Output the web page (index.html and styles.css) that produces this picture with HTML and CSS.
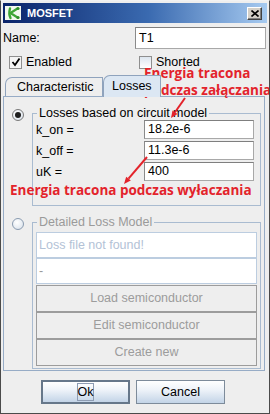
FILE: index.html
```html
<!DOCTYPE html>
<html lang="pl">
<head>
    <meta charset="UTF-8">
    <title>MOSFET</title>
    <link rel="stylesheet" href="styles.css">
</head>
<body>
    <div class="window">
        <div class="titlebar">
            <svg class="app-icon" width="16" height="14" viewBox="0 0 16 14">
                <rect x="0" y="0" width="16" height="14" fill="#f2f8ee"/>
                <path d="M5 2.5 C4 6 4 9 5.5 12" stroke="#3da535" stroke-width="2.4" fill="none" stroke-linecap="round"/>
                <path d="M5.5 7 L12.5 2.5 M5.5 7 L12.5 11.5" stroke="#3da535" stroke-width="2.2" fill="none" stroke-linecap="round"/>
                <circle cx="13" cy="2.5" r="1.6" fill="#2f8f2a"/>
                <circle cx="13" cy="11.5" r="1.6" fill="#2f8f2a"/>
            </svg>
            <span class="title">MOSFET</span>
            <span class="close">
                <svg width="8" height="7" viewBox="0 0 8 7">
                    <path d="M0.5 0.5 L7.5 6.5 M7.5 0.5 L0.5 6.5" stroke="#000" stroke-width="1.6"/>
                </svg>
            </span>
        </div>

        <div class="name-row">
            <span class="label">Name:</span>
            <div class="field name-field">T1</div>
        </div>

        <div class="check-row">
            <div class="check-item">
                <span class="check checked">
                    <svg width="10" height="10" viewBox="0 0 10 10">
                        <path d="M1.5 5 L4 8 L8.5 1.5" stroke="#000" stroke-width="1.8" fill="none"/>
                    </svg>
                </span>
                Enabled
            </div>
            <div class="check-item">
                <span class="check"></span>
                Shorted
            </div>
        </div>

        <div class="tabs">
            <div class="tab tab-char">Characteristic</div>
            <div class="tab tab-losses active">Losses</div>
        </div>

        <div class="panel">
            <div class="option">
                <span class="radio on"></span>
                <fieldset class="group">
                    <legend>Losses based on circuit model</legend>
                    <div class="params">
                        <div class="param"><span>k_on =</span><div class="field">18.2e-6</div></div>
                        <div class="param"><span>k_off =</span><div class="field">11.3e-6</div></div>
                        <div class="param"><span>uK =</span><div class="field">400</div></div>
                    </div>
                </fieldset>
            </div>

            <div class="option">
                <span class="radio"></span>
                <fieldset class="group group-off">
                    <legend>Detailed Loss Model</legend>
                    <div class="file-field hint">Loss file not found!</div>
                    <div class="file-field">-</div>
                    <div class="flat-buttons">
                        <div class="flat-btn">Load semiconductor</div>
                        <div class="flat-btn">Edit semiconductor</div>
                        <div class="flat-btn">Create new</div>
                    </div>
                </fieldset>
            </div>
        </div>

        <div class="footer">
            <button class="btn btn-default"><span class="focus">Ok</span></button>
            <button class="btn">Cancel</button>
        </div>

        <!-- adnotacje na zrzucie -->
        <div class="note note-on">Energia tracona<br>podczas załączania</div>
        <div class="note note-off">Energia tracona podczas wyłaczania</div>
        <svg class="arrows" width="270" height="414" viewBox="0 0 270 414">
            <path d="M184 97 L174 111.3" stroke="#e3232b" stroke-width="2"/>
            <polygon points="170,117 176.5,113 171.5,109.6" fill="#e3232b"/>
            <path d="M146 156 L127.5 177.7" stroke="#e3232b" stroke-width="2"/>
            <polygon points="123,183 129.8,179.6 125.2,175.8" fill="#e3232b"/>
        </svg>
    </div>
</body>
</html>
```

FILE: styles.css
```css
* {
    margin: 0;
    padding: 0;
    box-sizing: border-box;
}

body {
    background: #eeeeee;
    font-family: 'Liberation Sans', Arial, sans-serif;
    font-size: 12.5px;
    color: #000;
}

.window {
    position: relative;
    width: 270px;
    height: 414px;
    padding: 2px;
    background: #eeeeee;
    border: 1px solid #4a4a4a;
    border-top-color: #f2f2f2;
    overflow: hidden;
}

/* Pasek tytułu */
.titlebar {
    height: 20px;
    display: flex;
    align-items: center;
    padding: 0 5px 0 2px;
    background: linear-gradient(to right, #0a246a, #3a6ab0 55%, #a6caf0);
}

.title {
    margin-left: 6px;
    color: #fff;
    font-weight: bold;
    font-size: 11px;
}

.close {
    margin-left: auto;
    width: 15px;
    height: 13px;
    display: flex;
    align-items: center;
    justify-content: center;
    background: #d4d0c8;
    border: 1px solid;
    border-color: #ffffff #404040 #404040 #ffffff;
    box-shadow: inset -1px -1px #808080;
}

/* Nazwa */
.name-row {
    margin-top: 4px;
    height: 22px;
    display: flex;
    align-items: center;
    justify-content: space-between;
    padding-right: 1px;
}

.field {
    background: #fff;
    border: 1px solid #a8a8a8;
    border-top-color: #7f7f7f;
    border-left-color: #8a8a8a;
    padding-left: 3px;
    white-space: nowrap;
}

.name-field {
    width: 131px;
    height: 22px;
    line-height: 20px;
}

/* Checkboxy */
.check-row {
    margin-top: 3px;
    height: 20px;
    display: grid;
    grid-template-columns: 130px auto;
    align-items: center;
    padding-left: 6px;
}

.check-item {
    display: flex;
    align-items: center;
}

.check {
    width: 13px;
    height: 13px;
    margin-right: 4px;
    display: flex;
    align-items: center;
    justify-content: center;
    border: 1px solid #8f8f8f;
    background: linear-gradient(#dde6ef, #ffffff);
}

.check.checked {
    background: #f4f4f4;
}

/* Zakładki */
.tabs {
    margin-top: 3px;
    height: 21px;
    display: flex;
    align-items: flex-end;
    padding-left: 2px;
}

.tab {
    height: 19px;
    line-height: 18px;
    border: 1px solid #8fa3bd;
    border-bottom: none;
    border-top-left-radius: 7px;
    background: #eeeeee;
    white-space: nowrap;
}

.tab-char {
    width: 98px;
    padding-left: 11px;
}

.tab-losses {
    width: 58px;
    padding-left: 8px;
}

.tab.active {
    position: relative;
    z-index: 1;
    height: 22px;
    margin-bottom: -1px;
    line-height: 20px;
    background: #dce7f3;
}

.panel {
    margin-right: 2px;
    border: 1px solid #97acc6;
    padding: 0 0 1px 4px;
    background: #eeeeee;
}

.option {
    margin-top: 9px;
    display: flex;
    align-items: flex-start;
}

.radio {
    flex: none;
    width: 12px;
    height: 12px;
    margin: 3px 8px 0 4px;
    border-radius: 50%;
    border: 1px solid #8a9bb0;
    background: radial-gradient(circle at 40% 35%, #ffffff, #d6dfe9);
    display: flex;
    align-items: center;
    justify-content: center;
}

.radio.on {
    border-color: #7a7a7a;
}

.radio.on::after {
    content: '';
    width: 6px;
    height: 6px;
    border-radius: 50%;
    background: #1e1e1e;
}

/* Ramki grup */
.group {
    flex: 1;
    margin-right: 3px;
    border: 1px solid #a9bbd0;
    padding: 0 6px 24px 3px;
    min-width: 0;
}

.group legend {
    margin-left: 1px;
    padding: 0 2px;
    line-height: 14px;
    height: 14px;
}

.params {
    display: flex;
    flex-direction: column;
    gap: 2px;
}

.param {
    display: flex;
    justify-content: space-between;
    align-items: center;
    height: 19px;
}

.param .field {
    width: 110px;
    height: 19px;
    line-height: 17px;
}

.group-off {
    padding: 3px 3px 2px 3px;
}

.group-off legend {
    color: #9a9a9a;
}

.file-field {
    height: 26px;
    line-height: 24px;
    padding-left: 2px;
    background: #fff;
    border: 1px solid #bccde0;
    color: #9a9a9a;
}

.file-field.hint {
    color: #b3c2d6;
}

.flat-buttons {
    margin-top: 1px;
}

.flat-btn {
    height: 27px;
    line-height: 25px;
    text-align: center;
    border: 1px solid #9c9c9c;
    color: #9c9c9c;
    background: #eeeeee;
}

/* Przyciski */
.footer {
    margin-top: 9px;
    display: flex;
    justify-content: center;
    gap: 6px;
    padding-right: 4px;
}

.btn {
    width: 89px;
    height: 24px;
    font-family: 'Liberation Sans', Arial, sans-serif;
    font-size: 12.5px;
    color: #000;
    border: 1px solid #7d8b9a;
    background: linear-gradient(#ffffff, #eef3f9 40%, #c3d4e7);
}

.btn-default {
    border: 2px solid #66778a;
}

.focus {
    border: 1px solid #8d9cb3;
    padding: 1px 0;
}

/* Adnotacje (czerwony tekst i strzałki) */
.note {
    position: absolute;
    font-family: 'Open Sans', sans-serif;
    font-weight: bold;
    font-size: 13.5px;
    line-height: 17px;
    color: #e3232b;
    white-space: nowrap;
}

.note-on {
    left: 143px;
    top: 64px;
}

.note-off {
    left: 9px;
    top: 181px;
}

.arrows {
    position: absolute;
    left: 0;
    top: 0;
    pointer-events: none;
}
```
